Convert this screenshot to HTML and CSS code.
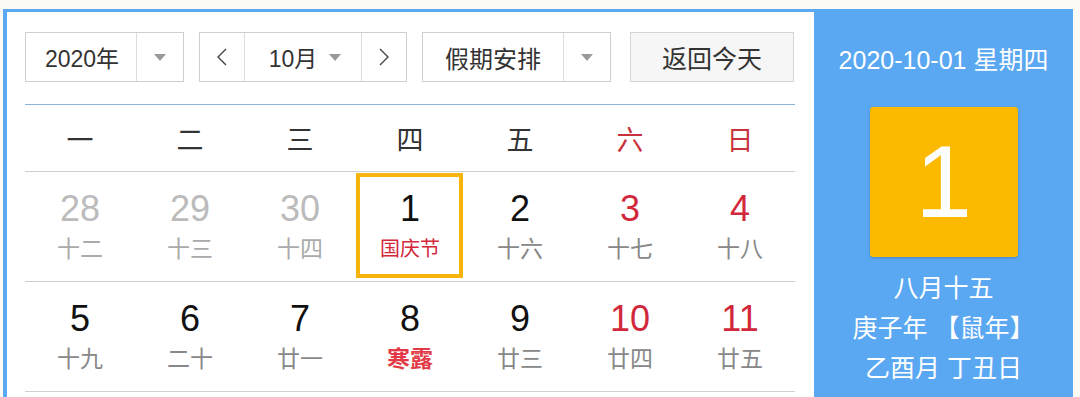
FILE: index.html
```html
<!DOCTYPE html>
<html lang="zh-CN">
<head>
    <meta charset="UTF-8">
    <meta name="viewport" content="width=device-width, initial-scale=1.0">
    <title>万年历</title>
    <link rel="stylesheet" href="styles.css">
</head>
<body>

    <div class="calendar">
        <div class="main">

            <!-- 工具栏 -->
            <div class="toolbar">
                <div class="select year">
                    <span class="select-text">2020年</span>
                    <span class="select-arrow"><i class="tri"></i></span>
                </div>
                <div class="select month">
                    <span class="nav">
                        <svg width="12" height="20" viewBox="0 0 12 20"><polyline points="10,2 2,10 10,18" fill="none" stroke="#444" stroke-width="1.4"/></svg>
                    </span>
                    <span class="month-text">10月 <i class="tri"></i></span>
                    <span class="nav">
                        <svg width="12" height="20" viewBox="0 0 12 20"><polyline points="2,2 10,10 2,18" fill="none" stroke="#444" stroke-width="1.4"/></svg>
                    </span>
                </div>
                <div class="select holiday">
                    <span class="select-text">假期安排</span>
                    <span class="select-arrow"><i class="tri"></i></span>
                </div>
                <div class="btn-today">返回今天</div>
            </div>

            <!-- 星期 -->
            <div class="weekdays">
                <div>一</div>
                <div>二</div>
                <div>三</div>
                <div>四</div>
                <div>五</div>
                <div class="weekend">六</div>
                <div class="weekend">日</div>
            </div>

            <!-- 日期 -->
            <div class="days">
                <div class="day other"><b>28</b><span>十二</span></div>
                <div class="day other"><b>29</b><span>十三</span></div>
                <div class="day other"><b>30</b><span>十四</span></div>
                <div class="day today"><b>1</b><span class="fest">国庆节</span></div>
                <div class="day"><b>2</b><span>十六</span></div>
                <div class="day rest"><b>3</b><span>十七</span></div>
                <div class="day rest"><b>4</b><span>十八</span></div>

                <div class="day"><b>5</b><span>十九</span></div>
                <div class="day"><b>6</b><span>二十</span></div>
                <div class="day"><b>7</b><span>廿一</span></div>
                <div class="day"><b>8</b><span class="term">寒露</span></div>
                <div class="day"><b>9</b><span>廿三</span></div>
                <div class="day rest"><b>10</b><span>廿四</span></div>
                <div class="day rest"><b>11</b><span>廿五</span></div>
            </div>
        </div>

        <!-- 右侧详情 -->
        <div class="side">
            <div class="side-date">2020-10-01 星期四</div>
            <div class="big-day">1</div>
            <div class="lunar">
                <div>八月十五</div>
                <div>庚子年 【鼠年】</div>
                <div>乙酉月 丁丑日</div>
            </div>
        </div>
    </div>

</body>
</html>
```

FILE: styles.css
```css
body {
    margin: 0;
    background: #fbfaf4;
    font-family: "Liberation Sans", Arial, "Noto Sans CJK SC", sans-serif;
    color: #222;
    overflow: hidden;
}
.calendar {
    display: flex;
    width: 1066px;
    height: 400px;
    margin: 9px 0 0 3px;
    border-top: 3px solid #5aa7f2;
    border-left: 4px solid #5aa7f2;
}
.main {
    width: 789px;
    padding: 20px 0 0 18px;
    background: #fff;
}
.toolbar {
    display: flex;
    height: 50px;
}
.select {
    display: flex;
    box-sizing: border-box;
    border: 1px solid #cfcfcf;
    background: #fff;
    font-size: 23px;
    color: #333;
}
.select-text {
    display: flex;
    align-items: center;
    justify-content: center;
    flex: 1;
}
.select-arrow {
    display: flex;
    align-items: center;
    justify-content: center;
    width: 46px;
    border-left: 1px solid #ddd;
}
.tri {
    display: inline-block;
    width: 0;
    height: 0;
    border-left: 6px solid transparent;
    border-right: 6px solid transparent;
    border-top: 7px solid #9a9a9a;
}
.year {
    width: 159px;
}
.year .select-text {
    padding-left: 2px;
}
.month {
    width: 208px;
    margin-left: 15px;
}
.nav {
    display: flex;
    align-items: center;
    justify-content: center;
    width: 44px;
}
.nav:first-child {
    border-right: 1px solid #ddd;
}
.nav:last-child {
    border-left: 1px solid #ddd;
}
.month-text {
    display: flex;
    align-items: center;
    justify-content: center;
    gap: 12px;
    flex: 1;
    padding-left: 4px;
}
.holiday {
    width: 189px;
    margin-left: 15px;
}
.holiday .select-text {
    font-size: 24px;
}
.btn-today {
    display: flex;
    align-items: center;
    justify-content: center;
    box-sizing: border-box;
    width: 164px;
    margin-left: 19px;
    border: 1px solid #d6d6d6;
    background: #f6f6f6;
    font-size: 25px;
    color: #333;
}
.weekdays {
    display: grid;
    grid-template-columns: repeat(7, 110px);
    height: 66px;
    margin-top: 22px;
    border-top: 1px solid #8fb2da;
    border-bottom: 1px solid #cfcfcf;
    width: 770px;
}
.weekdays div {
    display: flex;
    align-items: center;
    justify-content: center;
    font-size: 27px;
    color: #333;
}
.weekdays .weekend {
    color: #c8323c;
}
.days {
    display: grid;
    grid-template-columns: repeat(7, 110px);
    width: 770px;
}
.day {
    position: relative;
    display: flex;
    flex-direction: column;
    align-items: center;
    box-sizing: border-box;
    height: 110px;
    padding-top: 17px;
    border-bottom: 1px solid #cfcfcf;
}
.day b {
    font-weight: normal;
    font-size: 36px;
    line-height: 40px;
    color: #111;
}
.day span {
    font-size: 23px;
    line-height: 40px;
    color: #888;
}
.day.other b {
    color: #bbb;
}
.day.other span {
    color: #aaa;
}
.day.rest b {
    color: #d2283c;
}
.day .fest {
    font-size: 20px;
    color: #d4283c;
}
.day .term {
    font-weight: bold;
    color: #e23a46;
}
.day.today::after {
    content: "";
    position: absolute;
    top: 1px;
    left: 1px;
    right: 2px;
    bottom: 3px;
    border: 4px solid #f6b40c;
}
.side {
    display: flex;
    flex-direction: column;
    align-items: center;
    width: 259px;
    background: #5aa7f2;
    color: #fff;
}
.side-date {
    margin-top: 33px;
    font-size: 25px;
    line-height: 30px;
}
.big-day {
    display: flex;
    align-items: center;
    justify-content: center;
    width: 148px;
    height: 150px;
    margin-top: 32px;
    background: #fbb900;
    border-radius: 3px;
    box-shadow: 0 1px 3px rgba(0, 0, 0, 0.2);
    font-size: 102px;
}
.lunar {
    margin-top: 11px;
    text-align: center;
    font-size: 25px;
    line-height: 40px;
}
```
